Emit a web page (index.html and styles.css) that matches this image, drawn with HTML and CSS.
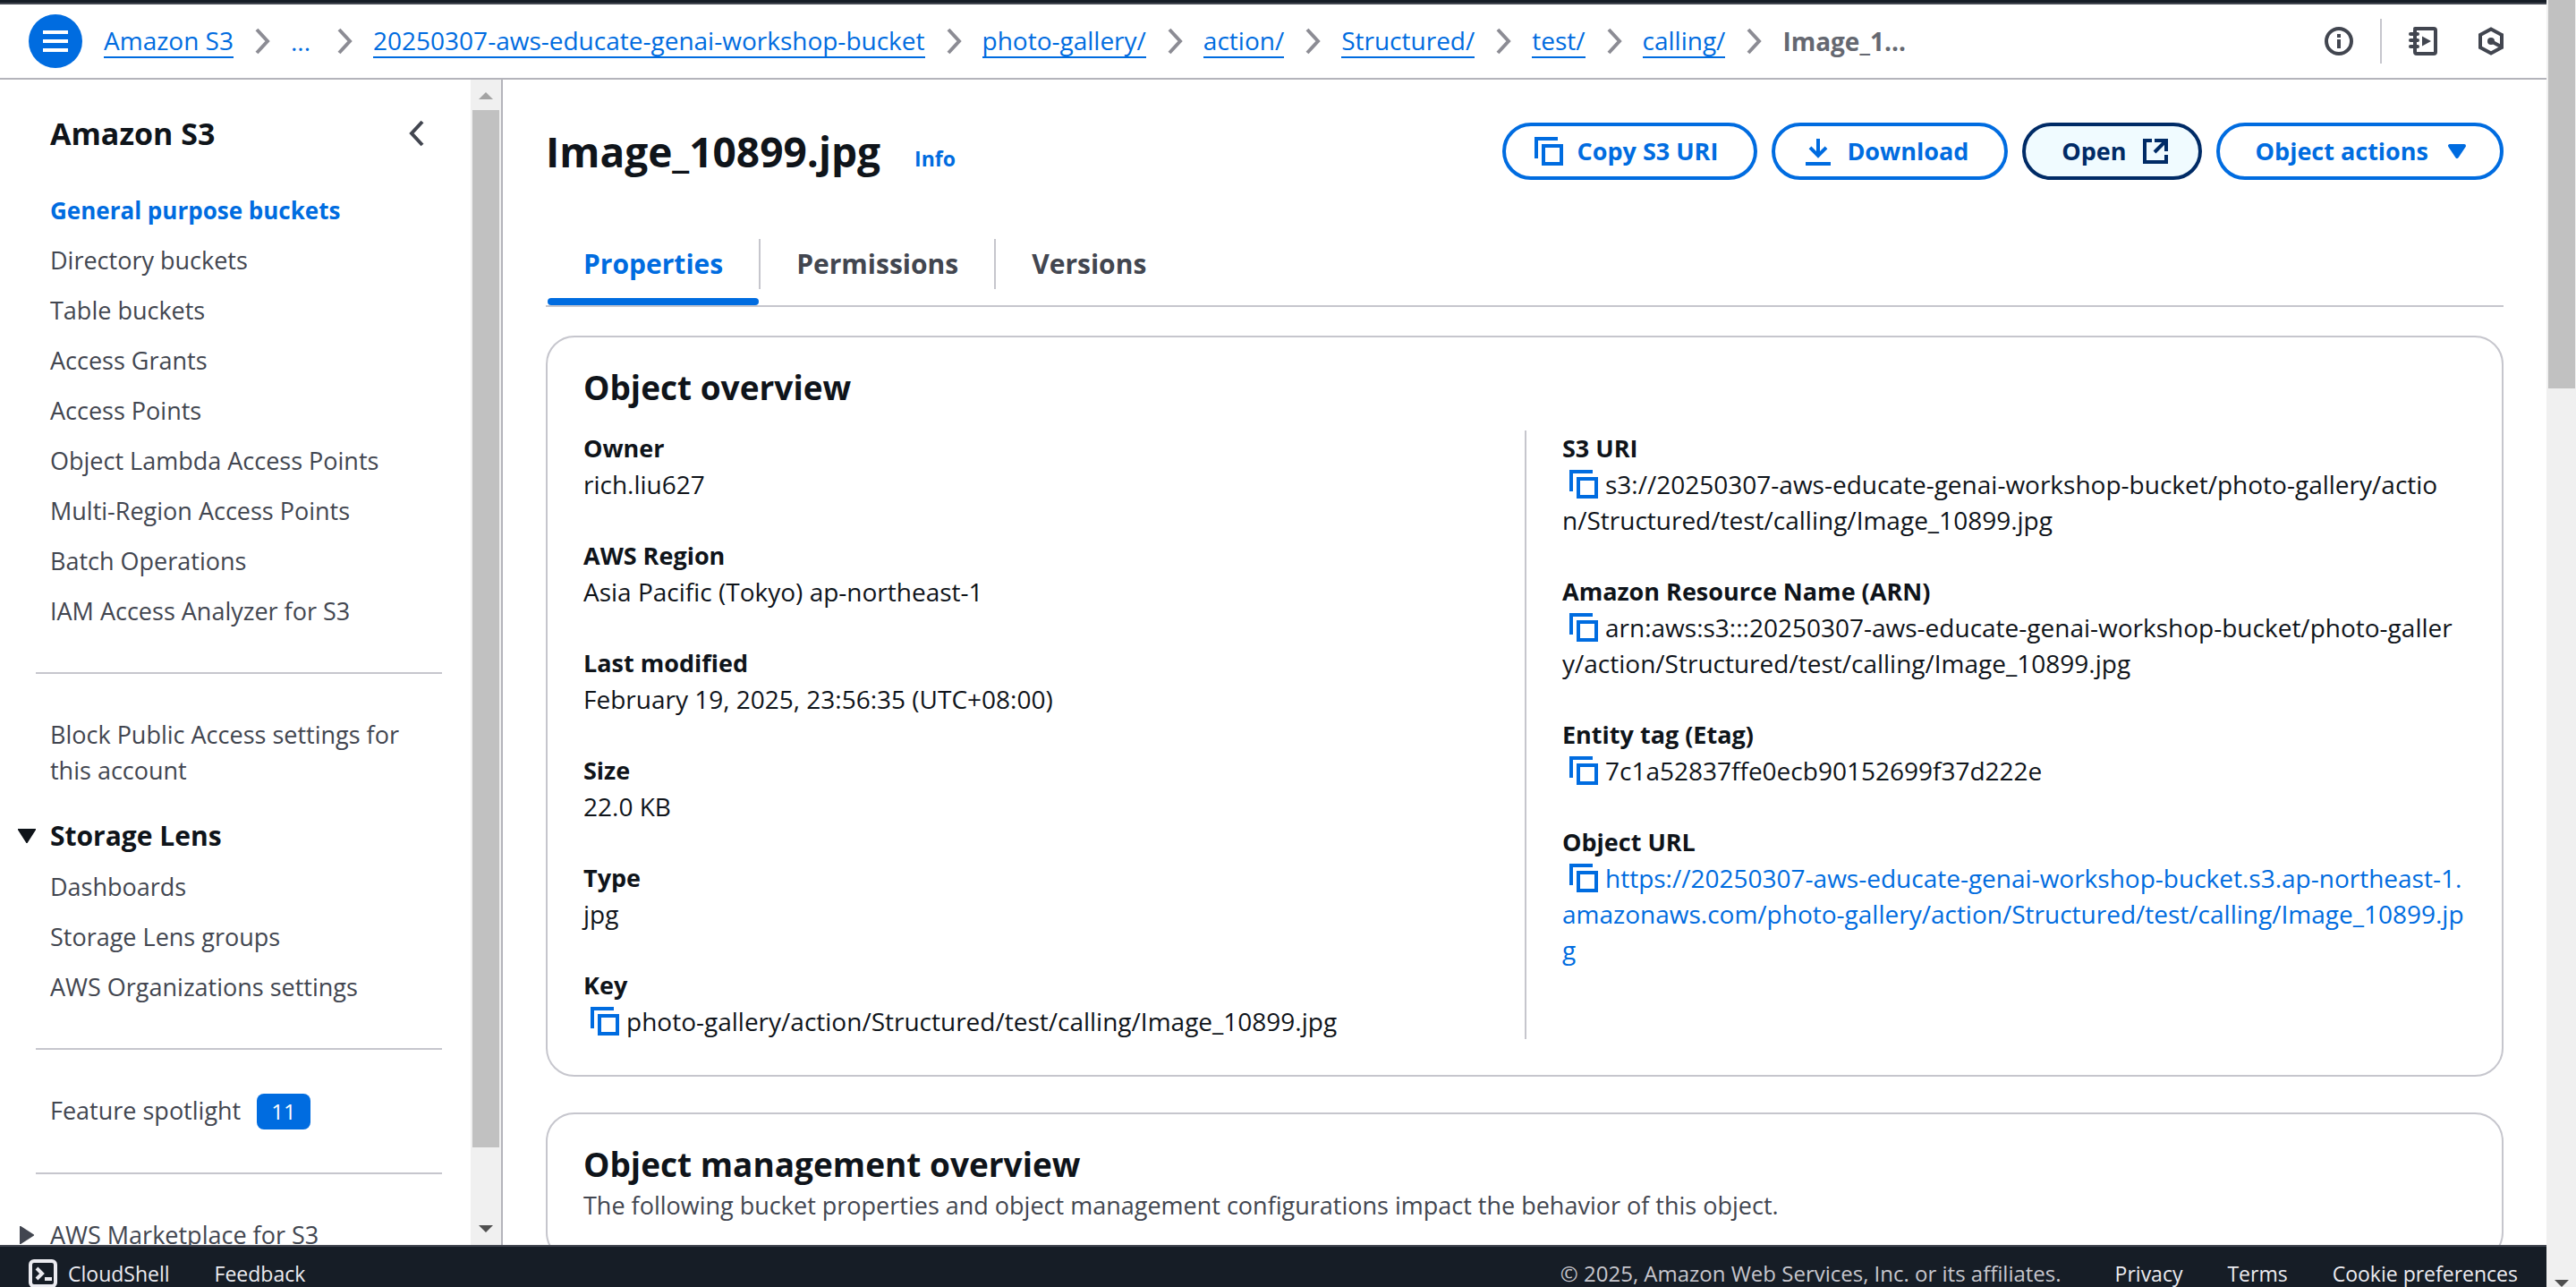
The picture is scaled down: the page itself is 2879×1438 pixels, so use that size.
FILE: index.html
```html
<!DOCTYPE html>
<html lang="en">
<head>
<meta charset="utf-8">
<title>Image_10899.jpg - S3 object</title>
<link rel="stylesheet" href="styles.css">
</head>
<body>
<svg class="sprite" aria-hidden="true">
  <symbol id="copy" viewBox="0 0 16 16"><path d="M1 12V1h12M5 5h10v10H5z"/></symbol>
  <symbol id="chevron" viewBox="0 0 16 16"><path d="M5 1.500 11 8l-6 6.500"/></symbol>
</svg>
<div class="window">
  <div class="page">
    <header class="topbar">
      <button class="menu" aria-label="Open navigation"><svg viewBox="0 0 16 16"><path d="M1 3h14M1 8h14M1 13h14"/></svg></button>
      <nav class="crumbs" aria-label="Breadcrumbs">
        <a href="#">Amazon S3</a><svg><use href="#chevron"/></svg>
        <button class="more">...</button><svg><use href="#chevron"/></svg>
        <a href="#">20250307-aws-educate-genai-workshop-bucket</a><svg><use href="#chevron"/></svg>
        <a href="#">photo-gallery/</a><svg><use href="#chevron"/></svg>
        <a href="#">action/</a><svg><use href="#chevron"/></svg>
        <a href="#">Structured/</a><svg><use href="#chevron"/></svg>
        <a href="#">test/</a><svg><use href="#chevron"/></svg>
        <a href="#">calling/</a><svg><use href="#chevron"/></svg>
        <span class="here">Image_1...</span>
      </nav>
      <div class="tools">
        <button aria-label="Info"><svg viewBox="0 0 32 32"><circle cx="16" cy="16" r="14"/><path d="M16 14v10M16 8v4"/></svg></button>
        <span class="rule"></span>
        <button aria-label="Tutorials"><svg viewBox="0 0 32 32"><path d="M7 2h21a2 2 0 0 1 2 2v24a2 2 0 0 1-2 2H9a2 2 0 0 1-2-2V4a2 2 0 0 1 2-2M2 8h8M2 15h8M2 22h8" stroke-linecap="round"/><path class="solid" d="m15 10.500 10 5.500-10 5.500z"/></svg></button>
        <button aria-label="Diagnostics"><svg viewBox="0 0 32 32"><path d="M16 2.500 28 9v14l-12 6.500L4 23V9zM16 16l11 6"/><circle class="solid" cx="16" cy="16" r="4"/></svg></button>
      </div>
    </header>
    <div class="body">
      <aside class="side">
        <div class="side-content">
          <div class="side-head"><h2>Amazon S3</h2><button aria-label="Close navigation"><svg viewBox="0 0 16 16"><path d="M11 1.500 5 8l6 6.500"/></svg></button></div>
          <ul>
            <li><a class="current" href="#">General purpose buckets</a></li>
            <li><a href="#">Directory buckets</a></li>
            <li><a href="#">Table buckets</a></li>
            <li><a href="#">Access Grants</a></li>
            <li><a href="#">Access Points</a></li>
            <li><a href="#">Object Lambda Access Points</a></li>
            <li><a href="#">Multi-Region Access Points</a></li>
            <li><a href="#">Batch Operations</a></li>
            <li><a href="#">IAM Access Analyzer for S3</a></li>
          </ul>
          <hr>
          <ul><li><a href="#">Block Public Access settings for this account</a></li></ul>
          <button class="section"><svg viewBox="0 0 20 16"><path d="M1 1h18l-9 14z"/></svg>Storage Lens</button>
          <ul>
            <li><a href="#">Dashboards</a></li>
            <li><a href="#">Storage Lens groups</a></li>
            <li><a href="#">AWS Organizations settings</a></li>
          </ul>
          <hr>
          <ul><li><a href="#">Feature spotlight</a><span class="badge">11</span></li></ul>
          <hr>
          <div class="market"><svg viewBox="0 0 16 20"><path d="M1 1v18l14-9z"/></svg><a href="#">AWS Marketplace for S3</a></div>
        </div>
        <div class="side-scroll" aria-hidden="true">
          <svg class="up" viewBox="0 0 16 8"><path d="M0 8h16L8 0z"/></svg>
          <div class="thumb"></div>
          <svg class="down" viewBox="0 0 16 8"><path d="M0 0h16L8 8z"/></svg>
        </div>
      </aside>
      <main>
        <div class="title">
          <h1>Image_10899.jpg</h1><a class="info" href="#">Info</a>
          <div class="actions">
            <button class="icon-first"><svg><use href="#copy"/></svg>Copy S3 URI</button>
            <button class="icon-first"><svg viewBox="0 0 16 16"><path d="M8 1v9M3.500 5.900 8 10.400l4.500-4.500M1 15h14"/></svg>Download</button>
            <button class="icon-last hover">Open<svg viewBox="0 0 16 16"><path d="M6 2H2v12h12v-4M7.500 2H14v6M13.500 2.500l-6 6"/></svg></button>
            <button class="icon-last">Object actions<svg class="caret" viewBox="0 0 16 16"><path d="M4 5h8l-4 6z"/></svg></button>
          </div>
        </div>
        <div class="tabs" role="tablist">
          <button class="tab active" role="tab" aria-selected="true">Properties</button>
          <span class="tab-rule"></span>
          <button class="tab" role="tab">Permissions</button>
          <span class="tab-rule"></span>
          <button class="tab" role="tab">Versions</button>
        </div>
        <section class="card">
          <h2>Object overview</h2>
          <div class="columns">
            <dl>
              <div><dt>Owner</dt><dd>rich.liu627</dd></div>
              <div><dt>AWS Region</dt><dd>Asia Pacific (Tokyo) ap-northeast-1</dd></div>
              <div><dt>Last modified</dt><dd>February 19, 2025, 23:56:35 (UTC+08:00)</dd></div>
              <div><dt>Size</dt><dd>22.0 KB</dd></div>
              <div><dt>Type</dt><dd>jpg</dd></div>
              <div><dt>Key</dt><dd><button class="copy" aria-label="Copy key"><svg><use href="#copy"/></svg></button>photo-gallery/action/Structured/test/calling/Image_10899.jpg</dd></div>
            </dl>
            <dl>
              <div><dt>S3 URI</dt><dd><button class="copy" aria-label="Copy S3 URI"><svg><use href="#copy"/></svg></button>s3://20250307-aws-educate-genai-workshop-bucket/photo-gallery/actio<br>n/Structured/test/calling/Image_10899.jpg</dd></div>
              <div><dt>Amazon Resource Name (ARN)</dt><dd><button class="copy" aria-label="Copy ARN"><svg><use href="#copy"/></svg></button>arn:aws:s3:::20250307-aws-educate-genai-workshop-bucket/photo-galler<br>y/action/Structured/test/calling/Image_10899.jpg</dd></div>
              <div><dt>Entity tag (Etag)</dt><dd><button class="copy" aria-label="Copy Etag"><svg><use href="#copy"/></svg></button>7c1a52837ffe0ecb90152699f37d222e</dd></div>
              <div><dt>Object URL</dt><dd><button class="copy" aria-label="Copy URL"><svg><use href="#copy"/></svg></button><a href="#">https://20250307-aws-educate-genai-workshop-bucket.s3.ap-northeast-1.<br>amazonaws.com/photo-gallery/action/Structured/test/calling/Image_10899.jp<br>g</a></dd></div>
            </dl>
          </div>
        </section>
        <section class="card">
          <h2>Object management overview</h2>
          <p>The following bucket properties and object management configurations impact the behavior of this object.</p>
        </section>
      </main>
    </div>
    <footer>
      <button class="shell"><svg viewBox="0 0 32 32"><rect x="2" y="2" width="28" height="28" rx="4"/><path d="m9 10 6 6-6 6M18 22h8"/></svg>CloudShell</button>
      <a href="#">Feedback</a>
      <span class="legal">© 2025, Amazon Web Services, Inc. or its affiliates.</span>
      <a href="#">Privacy</a>
      <a href="#">Terms</a>
      <a href="#">Cookie preferences</a>
    </footer>
  </div>
  <div class="page-scroll" aria-hidden="true">
    <div class="page-thumb"></div>
    <svg class="down" viewBox="0 0 16 8"><path d="M0 0h16L8 8z"/></svg>
  </div>
</div>
</body>
</html>
```
FILE: styles.css
```css
* { box-sizing: border-box; }
body {
  margin: 0;
  font: 28px/40px "Open Sans", "Noto Sans", sans-serif;
  color: #0f141a;
  background: #fff;
}
h1, h2, p, ul, dl, dd { margin: 0; padding: 0; }
h1, h2, dt { font-weight: 700; }
button { font: inherit; color: inherit; background: none; border: 0; padding: 0; }
a { color: #006ce0; text-decoration: none; }
svg { width: 32px; height: 32px; fill: none; stroke: currentColor; stroke-width: 2; flex: none; }
.sprite { position: absolute; width: 0; height: 0; }

.window { display: flex; height: 100vh; overflow: hidden; }
.page { flex: 1; min-width: 0; display: flex; flex-direction: column; border-top: 3px solid #161d26; }

.topbar {
  display: flex;
  align-items: center;
  height: 86px;
  flex: none;
  padding: 0 46px 0 32px;
  border-top: 2px solid #424650;
  border-bottom: 2px solid #b4b4bb;
}
.menu { width: 60px; height: 60px; border-radius: 50%; background: #006ce0; color: #fff; display: grid; place-items: center; margin-right: 24px; }
.crumbs { display: flex; align-items: center; gap: 16px; white-space: nowrap; }
.crumbs svg { color: #8c8c94; }
.crumbs a { line-height: 36px; border-bottom: 2px solid; }
.more { color: #006ce0; padding-right: 6px; }
.here { font-weight: 700; color: #656871; }
.tools { display: flex; align-items: center; margin-left: auto; color: #424650; }
.tools button { display: flex; }
.tools button + button { margin-left: 44px; }
.tools svg, .shell svg { stroke-width: 4; }
.tools .rule { width: 2px; height: 50px; background: #c6c6cd; margin: 0 30px; }
.solid { fill: currentColor; stroke: none; }

.body { flex: 1; min-height: 0; display: flex; }
.side { width: 562px; flex: none; display: flex; border-right: 2px solid #b4b4bb; overflow: hidden; font-size: 27px; }
.side-content { flex: 1; color: #424650; }
.side-head { display: flex; justify-content: space-between; align-items: center; padding: 38px 44px 44px 56px; }
.side-head h2 { font-size: 34px; line-height: 44px; color: #0f141a; }
.side-head button { display: flex; }
.side ul { list-style: none; padding: 0 40px 0 56px; display: flex; flex-direction: column; gap: 16px; }
.side a { color: inherit; }
.side a.current { color: #006ce0; font-size: 26px; font-weight: 700; }
.side hr { border: 0; height: 2px; background: #c6c6cd; margin: 48px 32px 48px 40px; }
.section { display: flex; align-items: center; gap: 16px; margin: 32px 0 16px 20px; font-size: 30px; line-height: 42px; font-weight: 700; color: #0f141a; }
.section svg { width: 20px; height: 16px; fill: currentColor; }
.badge { display: inline-block; margin-left: 18px; padding: 0 16px; border-radius: 8px; background: #006ce0; color: #fff; font-size: 24px; }
.market { display: flex; align-items: center; gap: 18px; padding-left: 22px; }
.market svg { width: 16px; height: 20px; fill: currentColor; }

.side-scroll { width: 34px; background: #f0f0f0; display: flex; flex-direction: column; align-items: center; padding: 14px 0; }
.side-scroll svg, .page-scroll svg { width: 16px; height: 8px; stroke: none; fill: #505050; }
.side-scroll .up { fill: #a3a3a3; }
.thumb { width: 30px; margin-top: 12px; flex: 0 0 91%; background: #c1c1c1; }
.down { margin-top: auto; }
.page-scroll { width: 33px; background: #f0f0f0; display: flex; flex-direction: column; align-items: center; }
.page-thumb { width: 30px; height: 434px; background: #c1c1c1; }

main { flex: 1; min-width: 0; padding: 48px 48px 0; overflow: hidden; }
.title { display: flex; align-items: center; height: 64px; }
h1 { font-size: 46px; line-height: 60px; }
.info { margin: 16px 0 0 38px; font-size: 23px; line-height: 32px; font-weight: 700; }
.actions { margin-left: auto; display: flex; gap: 16px; }
.actions button { display: flex; align-items: center; gap: 16px; height: 64px; border: 4px solid; border-radius: 40px; color: #006ce0; font-size: 27px; font-weight: 700; }
.actions .icon-first { padding: 0 40px 0 32px; }
.actions .icon-last { padding: 0 32px 0 40px; }
.actions .hover { color: #002b66; background: #f0fbff; }
.actions .caret { fill: currentColor; stroke-linejoin: round; }

.tabs { display: flex; align-items: center; margin-top: 56px; padding-left: 2px; border-bottom: 2px solid #c6c6cd; }
.tab { height: 84px; padding: 18px 40px 0; font-size: 30px; font-weight: 700; color: #424650; }
.tab::after { content: ""; display: block; height: 8px; margin: 18px -40px 0; border-radius: 4px; }
.tab.active { color: #006ce0; }
.tab.active::after { background: #006ce0; }
.tab-rule { width: 2px; height: 56px; background: #c6c6cd; margin-bottom: 8px; }

.card { margin-top: 32px; padding: 32px 40px 40px; border: 2px solid #c6c6cd; border-radius: 32px; }
.card + .card { margin-top: 40px; }
.card h2 { font-size: 37px; line-height: 48px; }
.card p { padding-top: 2px; color: #424650; font-size: 27px; }
.columns { display: grid; grid-template-columns: 1fr 1fr; margin-top: 24px; }
dl { display: flex; flex-direction: column; gap: 40px; min-width: 0; }
dl + dl { border-left: 2px solid #c6c6cd; padding-left: 40px; white-space: nowrap; }
dt { font-size: 27px; }
.copy { display: inline-flex; align-items: center; height: 40px; vertical-align: top; color: #006ce0; margin: 0 8px; }

footer { display: flex; align-items: center; height: 62px; flex: none; margin-bottom: -15px; padding: 0 32px; background: #161d26; border-top: 2px solid #424650; color: #c6c6cd; font-size: 23px; gap: 50px; }
footer a, .shell { color: #ebebf0; }
.shell { display: flex; align-items: center; gap: 12px; }
.legal { margin-left: auto; margin-right: 10px; font-size: 24px; }
```
